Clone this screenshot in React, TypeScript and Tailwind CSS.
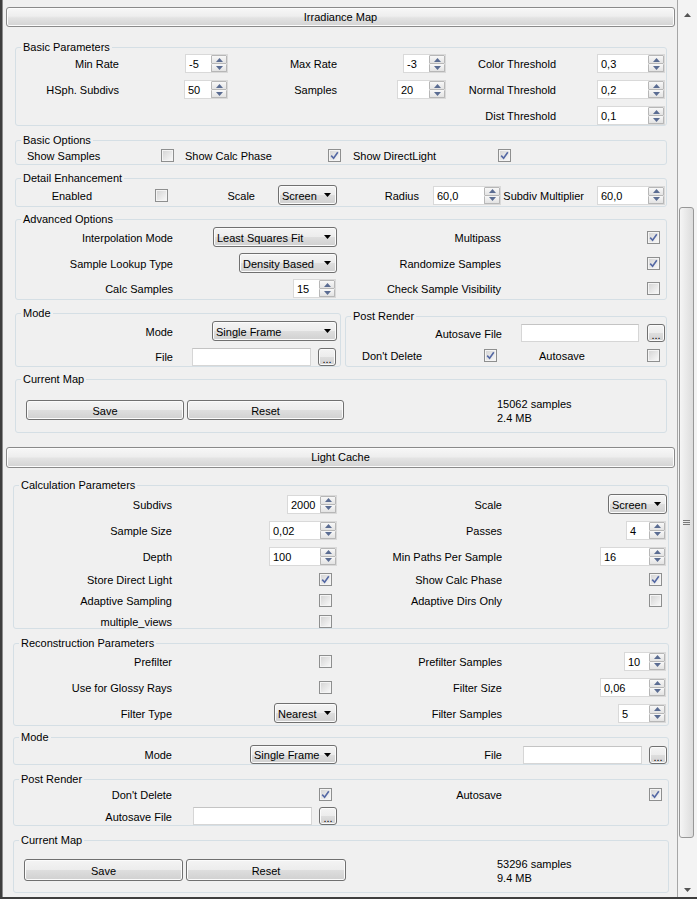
import React from "react";

const BTN =
  "border border-[#707070] bg-[linear-gradient(to_bottom,#f4f4f4_0%,#ececec_50%,#dedede_51%,#d0d0d0_100%)] shadow-[inset_0_0_0_1px_#fbfbfb]";

function Up({ c = "#5a6c92" }: { c?: string }) {
  return (
    <svg width="7" height="4" viewBox="0 0 7 4">
      <path d="M0 4 L3.5 0 L7 4Z" fill={c} />
    </svg>
  );
}
function Down({ c = "#5a6c92" }: { c?: string }) {
  return (
    <svg width="7" height="4" viewBox="0 0 7 4">
      <path d="M0 0 L7 0 L3.5 4Z" fill={c} />
    </svg>
  );
}

function Spinner({ v, w, cls = "" }: { v: string; w: string; cls?: string }) {
  return (
    <div className={`flex h-[19px] bg-white border border-[#d9d9d9] ${w} ${cls}`}>
      <div className="flex-1 pl-[3px] pt-[1px] leading-[17px] whitespace-nowrap overflow-hidden">{v}</div>
      <div className="w-[16px] flex flex-col">
        <div className="h-[9px] border border-[#b7b7b7] rounded-[1px] bg-gradient-to-b from-[#f8f8f8] to-[#e3e3e3] flex items-center justify-center">
          <Up />
        </div>
        <div className="h-[8px] border border-t-0 border-[#b7b7b7] rounded-[1px] bg-gradient-to-b from-[#f8f8f8] to-[#e3e3e3] flex items-center justify-center">
          <Down />
        </div>
      </div>
    </div>
  );
}

function Check({ on = false, cls = "" }: { on?: boolean; cls?: string }) {
  return (
    <div className={`w-[13px] h-[13px] border border-[#8e8f8f] bg-[#f4f4f4] p-[1px] ${cls}`}>
      <div className="w-full h-full bg-gradient-to-br from-[#d6d6d6] to-[#f7f7f7] flex items-center justify-center">
        {on && (
          <svg width="9" height="9" viewBox="0 0 9 9">
            <path d="M1.2 4.6 L3.6 7.2 L7.8 1.2" stroke="#5468a4" strokeWidth="1.6" fill="none" />
          </svg>
        )}
      </div>
    </div>
  );
}

function Drop({ v, w, h = "h-[20px]", cls = "" }: { v: string; w: string; h?: string; cls?: string }) {
  return (
    <div className={`flex items-center ${h} ${w} rounded-[3px] pl-[3px] pr-[5px] ${BTN} ${cls}`}>
      <span className="flex-1 whitespace-nowrap leading-[13px] translate-y-[1px]">{v}</span>
      <svg width="7" height="4" viewBox="0 0 7 4">
        <path d="M0 0 L7 0 L3.5 4Z" fill="#000" />
      </svg>
    </div>
  );
}

function TextBox({ w }: { w: string }) {
  return <div className={`h-[18px] bg-white border border-[#d6d6d6] border-t-[#c4c4c4] ${w}`} />;
}

function Dots({ cls = "" }: { cls?: string }) {
  return (
    <div className={`w-[18px] h-[18px] rounded-[3px] flex items-end justify-center pb-[2px] leading-[8px] ${BTN} ${cls}`}>
      ...
    </div>
  );
}

function Btn({ label, w, h }: { label: string; w: string; h: string }) {
  return (
    <div className={`${w} ${h} rounded-[3px] flex items-center justify-center ${BTN}`}>
      <span className="translate-y-[1px]">{label}</span>
    </div>
  );
}

function L({ children }: { children?: React.ReactNode }) {
  return <div className="text-right whitespace-nowrap leading-[13px] translate-y-[1px]">{children}</div>;
}
function T({ children }: { children?: React.ReactNode }) {
  return <span className="whitespace-nowrap leading-[13px] translate-y-[1px]">{children}</span>;
}
function C({ children }: { children?: React.ReactNode }) {
  return <div className="flex justify-end items-center">{children}</div>;
}

function Group({ title, cls, children }: { title: string; cls: string; children?: React.ReactNode }) {
  return (
    <fieldset className={`border border-[#d5dfe5] rounded-[3px] ${cls}`}>
      <legend className="ml-[5px] px-[2px] h-[13px] leading-[13px]">{title}</legend>
      {children}
    </fieldset>
  );
}

function Header({ title, h }: { title: string; h: string }) {
  return (
    <div
      className={`ml-[3px] w-[669px] ${h} rounded-[3px] border border-[#8a8a8a] bg-[linear-gradient(to_bottom,#f7f7f7_0%,#eeeeee_45%,#e3e3e3_55%,#d3d3d3_100%)] shadow-[inset_0_0_0_1px_#fcfcfc] flex items-center justify-center`}
    >
      {title}
    </div>
  );
}

function Scrollbar() {
  return (
    <div className="w-[20px] flex flex-col border-l border-[#a6a6a6] bg-[#f3f3f3]">
      <div className="h-[30px] flex items-center justify-center">
        <Up c="#555555" />
      </div>
      <div className="h-[177px]" />
      <div className="h-[631px] ml-[1px] w-[15px] rounded-[3px] border border-[#979797] bg-gradient-to-r from-[#f5f5f5] to-[#dcdcdc] flex flex-col items-center justify-center gap-[1px]">
        <div className="w-[7px] h-[1px] bg-[#7a7a7a]" />
        <div className="w-[7px] h-[1px] bg-[#7a7a7a]" />
        <div className="w-[7px] h-[1px] bg-[#7a7a7a]" />
      </div>
      <div className="flex-1" />
      <div className="h-[14px] flex items-center justify-center">
        <Down c="#555555" />
      </div>
    </div>
  );
}

export default function App() {
  return (
    <div className="w-[697px] h-[899px] flex flex-col bg-[#f0f0f0] overflow-hidden text-[11px] text-black font-['Liberation_Sans',Arial,sans-serif]">
      <div className="flex flex-1 min-h-0">
        <div className="w-[2px] bg-[#3e3e3e]" />
        <div className="w-[1px] bg-[#8d8d8d]" />
        <div className="w-[674px] flex flex-col pt-[7px]">
          <Header title="Irradiance Map" h="h-[20px]" />

          <Group title="Basic Parameters" cls="ml-[12px] w-[652px] mt-[14px]">
            <div className="grid grid-cols-[103px_109px_109px_109px_110px_109px] auto-rows-[19px] gap-y-[7px] items-center">
              <L>Min Rate</L>
              <C><Spinner v="-5" w="w-[43px]" /></C>
              <L>Max Rate</L>
              <C><Spinner v="-3" w="w-[43px]" /></C>
              <L>Color Threshold</L>
              <C><Spinner v="0,3" w="w-[68px]" /></C>
              <L>HSph. Subdivs</L>
              <C><Spinner v="50" w="w-[44px]" /></C>
              <L>Samples</L>
              <C><Spinner v="20" w="w-[49px]" /></C>
              <L>Normal Threshold</L>
              <C><Spinner v="0,2" w="w-[68px]" /></C>
              <div />
              <div />
              <div />
              <div />
              <L>Dist Threshold</L>
              <C><Spinner v="0,1" w="w-[68px]" /></C>
            </div>
          </Group>

          <Group title="Basic Options" cls="ml-[12px] w-[652px] mt-[8px]">
            <div className="h-[17px] pl-[11px] grid grid-cols-[134px_24px_143px_25px_145px_13px] items-center">
              <T>Show Samples</T>
              <Check />
              <T>Show Calc Phase</T>
              <Check on />
              <T>Show DirectLight</T>
              <Check on />
            </div>
          </Group>

          <Group title="Detail Enhancement" cls="ml-[12px] w-[652px] mt-[7px] pb-[2px]">
            <div className="h-[19px] grid grid-cols-[76px_76px_87px_82px_82px_82px_83px_81px] items-center">
              <L>Enabled</L>
              <C><Check /></C>
              <L>Scale</L>
              <C><Drop v="Screen" w="w-[59px]" /></C>
              <L>Radius</L>
              <C><Spinner v="60,0" w="w-[68px]" /></C>
              <L>Subdiv Multiplier</L>
              <C><Spinner v="60,0" w="w-[68px]" /></C>
            </div>
          </Group>

          <Group title="Advanced Options" cls="ml-[12px] w-[652px] mt-[6px] pb-[1px]">
            <div className="mt-[1px] grid grid-cols-[157px_164px_164px_164px] grid-rows-[20px_20px_19px] gap-y-[6px] items-center">
              <L>Interpolation Mode</L>
              <C><Drop v="Least Squares Fit" w="w-[124px]" /></C>
              <L>Multipass</L>
              <C><Check on cls="mr-[5px]" /></C>
              <L>Sample Lookup Type</L>
              <C><Drop v="Density Based" w="w-[98px]" /></C>
              <L>Randomize Samples</L>
              <C><Check on cls="mr-[5px]" /></C>
              <L>Calc Samples</L>
              <C><Spinner v="15" w="w-[43px]" cls="mr-[1px]" /></C>
              <L>Check Sample Visibility</L>
              <C><Check cls="mr-[5px]" /></C>
            </div>
          </Group>

          <div className="ml-[12px] mt-[7px] flex items-start gap-[4px]">
            <Group title="Mode" cls="w-[326px]">
              <div className="mt-[1px] h-[20px] grid grid-cols-[157px_164px] items-center">
                <L>Mode</L>
                <C><Drop v="Single Frame" w="w-[125px]" /></C>
              </div>
              <div className="mt-[6px] h-[19px] grid grid-cols-[157px_164px] items-center">
                <L>File</L>
                <C>
                  <div className="flex items-center gap-[7px] mr-[1px]">
                    <TextBox w="w-[119px]" />
                    <Dots />
                  </div>
                </C>
              </div>
            </Group>
            <Group title="Post Render" cls="w-[322px] mt-[3px] pb-[3px]">
              <div className="mt-[1px] h-[18px] flex items-center">
                <div className="w-[156px]">
                  <L>Autosave File</L>
                </div>
                <div className="ml-[19px]">
                  <TextBox w="w-[118px]" />
                </div>
                <Dots cls="ml-[8px] w-[17px]" />
              </div>
              <div className="mt-[5px] h-[16px] pl-[16px] grid grid-cols-[122px_13px_42px_108px_13px] items-center">
                <T>Don&apos;t Delete</T>
                <Check on />
                <span />
                <T>Autosave</T>
                <Check />
              </div>
            </Group>
          </div>

          <Group title="Current Map" cls="ml-[12px] w-[652px] mt-[6px] pb-[12px]">
            <div className="mt-[14px] h-[20px] pl-[10px] flex items-center">
              <Btn label="Save" w="w-[158px]" h="h-[20px]" />
              <div className="ml-[3px]">
                <Btn label="Reset" w="w-[157px]" h="h-[20px]" />
              </div>
              <div className="ml-[153px] mt-[2px] leading-[14px] whitespace-nowrap">
                <div>15062 samples</div>
                <div>2.4 MB</div>
              </div>
            </div>
          </Group>

          <div className="mt-[14px]">
            <Header title="Light Cache" h="h-[21px]" />
          </div>

          <Group title="Calculation Parameters" cls="ml-[10px] w-[656px] mt-[11px]">
            <div className="mt-[2px] h-[20px] grid grid-cols-[158px_165px_165px_164px] items-center">
              <L>Subdivs</L>
              <C><Spinner v="2000" w="w-[50px]" /></C>
              <L>Scale</L>
              <C><Drop v="Screen" w="w-[59px]" cls="mr-[-1px]" /></C>
            </div>
            <div className="mt-[6px] h-[20px] grid grid-cols-[158px_165px_165px_164px] items-center">
              <L>Sample Size</L>
              <C><Spinner v="0,02" w="w-[68px]" /></C>
              <L>Passes</L>
              <C><Spinner v="4" w="w-[40px]" /></C>
            </div>
            <div className="mt-[6px] h-[20px] grid grid-cols-[158px_165px_165px_164px] items-center">
              <L>Depth</L>
              <C><Spinner v="100" w="w-[68px]" /></C>
              <L>Min Paths Per Sample</L>
              <C><Spinner v="16" w="w-[66px]" /></C>
            </div>
            <div className="mt-[7px] h-[13px] grid grid-cols-[158px_165px_165px_164px] items-center">
              <L>Store Direct Light</L>
              <C><Check on cls="mr-[5px]" /></C>
              <L>Show Calc Phase</L>
              <C><Check on cls="mr-[4px]" /></C>
            </div>
            <div className="mt-[8px] h-[13px] grid grid-cols-[158px_165px_165px_164px] items-center">
              <L>Adaptive Sampling</L>
              <C><Check cls="mr-[5px]" /></C>
              <L>Adaptive Dirs Only</L>
              <C><Check cls="mr-[4px]" /></C>
            </div>
            <div className="mt-[8px] h-[13px] grid grid-cols-[158px_165px_165px_164px] items-center">
              <L>multiple_views</L>
              <C><Check cls="mr-[5px]" /></C>
            </div>
          </Group>

          <Group title="Reconstruction Parameters" cls="ml-[10px] w-[656px] mt-[8px] pb-[2px]">
            <div className="mt-[1px] h-[20px] grid grid-cols-[158px_165px_165px_164px] items-center">
              <L>Prefilter</L>
              <C><Check cls="mr-[5px]" /></C>
              <L>Prefilter Samples</L>
              <C><Spinner v="10" w="w-[42px]" /></C>
            </div>
            <div className="mt-[6px] h-[20px] grid grid-cols-[158px_165px_165px_164px] items-center">
              <L>Use for Glossy Rays</L>
              <C><Check cls="mr-[5px]" /></C>
              <L>Filter Size</L>
              <C><Spinner v="0,06" w="w-[66px]" /></C>
            </div>
            <div className="mt-[6px] h-[20px] grid grid-cols-[158px_165px_165px_164px] items-center">
              <L>Filter Type</L>
              <C><Drop v="Nearest" w="w-[63px]" /></C>
              <L>Filter Samples</L>
              <C><Spinner v="5" w="w-[48px]" /></C>
            </div>
          </Group>

          <Group title="Mode" cls="ml-[10px] w-[656px] mt-[5px]">
            <div className="mt-[1px] h-[19px] grid grid-cols-[158px_165px_165px_164px] items-center">
              <L>Mode</L>
              <C><Drop v="Single Frame" w="w-[87px]" h="h-[19px]" /></C>
              <L>File</L>
              <C>
                <div className="flex items-center gap-[7px] mr-[-1px]">
                  <TextBox w="w-[119px]" />
                  <Dots />
                </div>
              </C>
            </div>
          </Group>

          <Group title="Post Render" cls="ml-[10px] w-[656px] mt-[8px]">
            <div className="h-[16px] grid grid-cols-[158px_165px_165px_164px] items-center">
              <L>Don&apos;t Delete</L>
              <C><Check on cls="mr-[5px]" /></C>
              <L>Autosave</L>
              <C><Check on cls="mr-[4px]" /></C>
            </div>
            <div className="mt-[5px] h-[18px] grid grid-cols-[158px_165px_165px_164px] items-center">
              <L>Autosave File</L>
              <C>
                <div className="flex items-center gap-[7px]">
                  <TextBox w="w-[119px]" />
                  <Dots />
                </div>
              </C>
            </div>
          </Group>

          <Group title="Current Map" cls="ml-[10px] w-[656px] mt-[8px] pb-[11px]">
            <div className="mt-[12px] h-[22px] pl-[10px] flex items-center">
              <Btn label="Save" w="w-[159px]" h="h-[22px]" />
              <div className="ml-[3px]">
                <Btn label="Reset" w="w-[160px]" h="h-[22px]" />
              </div>
              <div className="ml-[151px] mt-[2px] leading-[14px] whitespace-nowrap">
                <div>53296 samples</div>
                <div>9.4 MB</div>
              </div>
            </div>
          </Group>
        </div>
        <Scrollbar />
      </div>
      <div className="h-[2px] bg-[#3e3e3e]" />
    </div>
  );
}
